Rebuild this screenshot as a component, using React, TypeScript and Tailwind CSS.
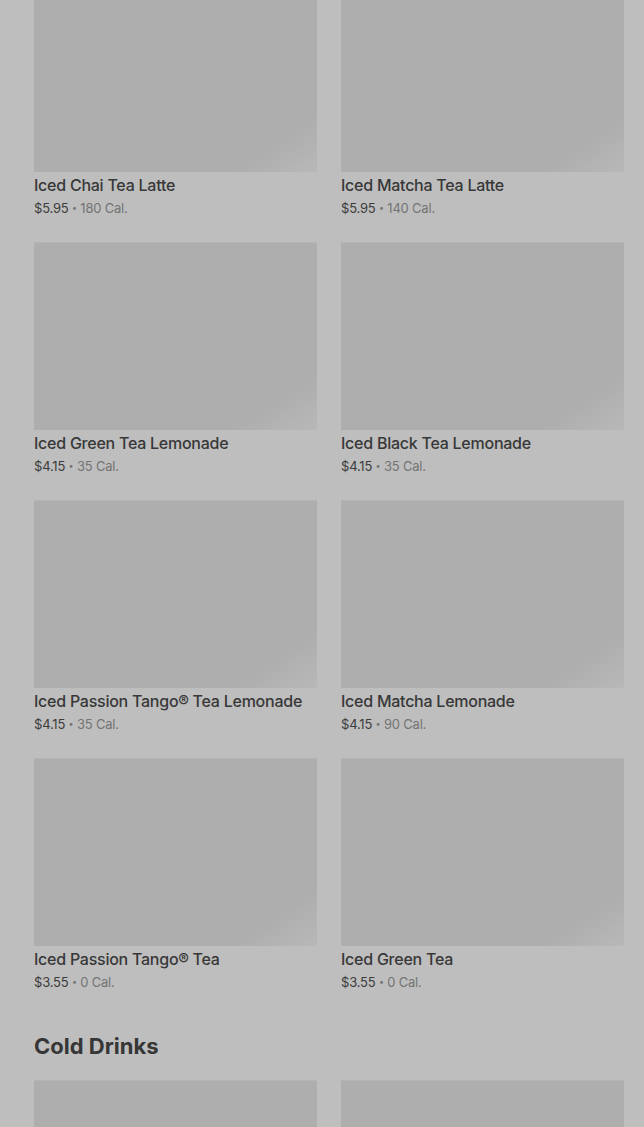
import React from 'react';

type Drink = { name: string; price: string; cal: string };

const teas: Drink[] = [
  { name: 'Iced Chai Tea Latte', price: '$5.95', cal: '180 Cal.' },
  { name: 'Iced Matcha Tea Latte', price: '$5.95', cal: '140 Cal.' },
  { name: 'Iced Green Tea Lemonade', price: '$4.15', cal: '35 Cal.' },
  { name: 'Iced Black Tea Lemonade', price: '$4.15', cal: '35 Cal.' },
  { name: 'Iced Passion Tango® Tea Lemonade', price: '$4.15', cal: '35 Cal.' },
  { name: 'Iced Matcha Lemonade', price: '$4.15', cal: '90 Cal.' },
  { name: 'Iced Passion Tango® Tea', price: '$3.55', cal: '0 Cal.' },
  { name: 'Iced Green Tea', price: '$3.55', cal: '0 Cal.' }
];

function DrinkCard({ drink }: { drink: Drink }) {
  return <div className="flex flex-col">
      <div className="h-[188px] bg-gradient-to-br from-[#aeaeae] from-85% to-[#b8b8b8] border-t border-[#b4b4b4]" />
      <p className="h-6 mt-[1px] text-[16px] leading-[24px] font-medium text-[#383838] tracking-[-0.25px]">{drink.name}</p>
      <p className="h-[21px] pt-[1px] overflow-hidden text-[13px] leading-[21px] text-[#3c3c3c] tracking-[-0.2px]">
        {drink.price}
        <span className="text-[#747474]"> <span className="text-[9px] leading-none align-[2px]">•</span> {drink.cal}</span>
      </p>
    </div>;
}

export default function App() {
  return <div className="w-[644px] h-[1127px] overflow-hidden bg-[#bebebe] font-['Inter',sans-serif]">
      <div className="-mt-[16px] pl-[34px] pr-[20px]">
        <div className="grid grid-cols-2 gap-x-6 gap-y-6">
          {teas.map(d => <DrinkCard key={d.name} drink={d} />)}
        </div>
        <h2 className="mt-[40px] mb-[20px] text-[22px] leading-7 font-bold text-[#363636]">Cold Drinks</h2>
        <div className="grid grid-cols-2 gap-x-6">
          <div className="h-[188px] bg-[#aeaeae] border-t border-[#b4b4b4]" />
          <div className="h-[188px] bg-[#aeaeae] border-t border-[#b4b4b4]" />
        </div>
      </div>
    </div>;
}
